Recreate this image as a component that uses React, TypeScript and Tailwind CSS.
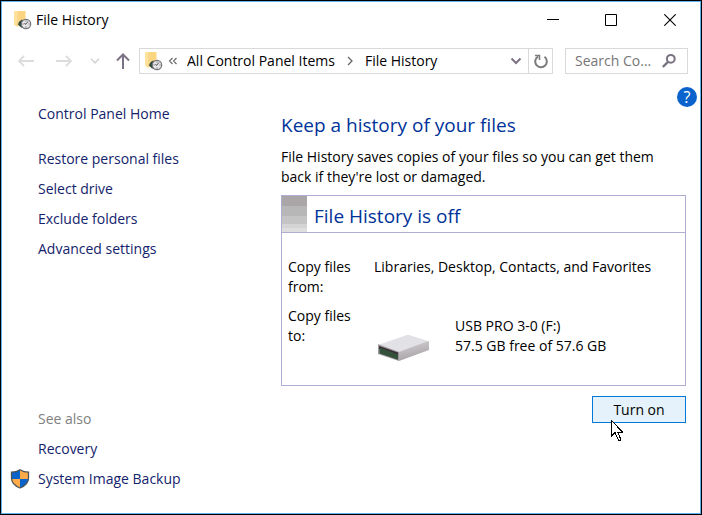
const TASK_LINKS = [
  "Restore personal files",
  "Select drive",
  "Exclude folders",
  "Advanced settings",
]

const linkClass = "text-[#13236b] hover:underline"

function FolderIcon({ className }: { className?: string }) {
  return (
    <svg className={className} width="18" height="20" viewBox="0 0 18 20" aria-hidden="true">
      <path d="M2 1h9.500v9L5 16 2 14z" fill="#fbd580" />
      <path d="M0 1h4l1 1v10l-1 5-4-2z" fill="#ffe29c" />
      <path d="M4 2v10l-1 4" fill="none" stroke="#f3c871" strokeWidth="0.8" />
      <path d="M8.500 9.500C6 10.500 4.500 12 4 14.500l3 3 3 .5z" fill="#2f4a3c" />
      <circle cx="12" cy="14" r="4.700" fill="#e6e6e6" stroke="#77737a" strokeWidth="1.200" />
      <path d="M11.500 14.500l2.500-3M11.500 14.500l-1-1.500M12 10.600v.9M12 16.500v.9M8.600 14h.9M14.600 14h.9" stroke="#444" strokeWidth="0.9" />
    </svg>
  )
}

function ShieldIcon() {
  return (
    <svg width="20" height="20" viewBox="0 0 20 20" aria-hidden="true">
      <defs>
        <clipPath id="shield">
          <path d="M10 .8C7.500 2.500 4.500 3.200 1.500 3.200v5.800c0 4.500 3.500 8 8.500 10 5-2 8.500-5.500 8.500-10V3.200C15.500 3.200 12.500 2.500 10 .8z" />
        </clipPath>
      </defs>
      <g clipPath="url(#shield)">
        <path d="M0 0h10v10H0zM10 10h10v10H10z" fill="#0a63c9" />
        <path d="M10 0h10v10H10zM0 10h10v10H0z" fill="#ffab4a" />
      </g>
      <path
        d="M10 .8C7.500 2.500 4.500 3.200 1.500 3.200v5.800c0 4.500 3.500 8 8.500 10 5-2 8.500-5.500 8.500-10V3.200C15.500 3.200 12.500 2.500 10 .8z"
        fill="none"
        stroke="#4c5458"
        strokeWidth="1.3"
      />
    </svg>
  )
}

function DriveIcon() {
  return (
    <svg width="54" height="28" viewBox="0 0 54 28" aria-hidden="true">
      <defs>
        <linearGradient id="drive-side" x1="0" y1="0" x2="0.3" y2="1">
          <stop offset="0" stopColor="#d3d1d4" />
          <stop offset="1" stopColor="#a9a3a6" />
        </linearGradient>
      </defs>
      <path d="M1 11L30 1q1-.3 2 0l19 6-29 12z" fill="#e1e1e6" />
      <path d="M22 18L51 7q1 0 1 1v8L22 27z" fill="url(#drive-side)" />
      <path d="M1 11q0-1 1-.6l20 7.600v9L1 20z" fill="#9c979c" />
      <path d="M2 12l19 6.600V21L2 15z" fill="#3a3034" />
      <path d="M2.500 13.500l18.500 7V25.800L2.500 19.500z" fill="#34523a" />
    </svg>
  )
}

function CursorIcon() {
  return (
    <svg
      className="pointer-events-none absolute top-6 left-[19px]"
      width="12"
      height="21"
      viewBox="0 0 12 21"
      aria-hidden="true"
      shapeRendering="crispEdges"
    >
      <path
        d="M.5.5v15.500l3.500-3.500 3.500 7.500h2v-1.500l-3-6.500h5z"
        fill="#fff"
        stroke="#000"
        strokeWidth="1"
      />
    </svg>
  )
}

function TitleBar() {
  return (
    <header className="flex h-9 items-center pl-3">
      <FolderIcon />
      <h1 className="ml-1 flex-1">File History</h1>
      <div className="flex h-full">
        <button aria-label="Minimize" className="flex w-[58px] items-center justify-center">
          <svg width="12" height="12" viewBox="0 0 12 12" stroke="#000">
            <path d="M0 5.500h12" />
          </svg>
        </button>
        <button aria-label="Maximize" className="flex w-[58px] items-center justify-center">
          <svg width="12" height="12" viewBox="0 0 12 12" stroke="#000" fill="none">
            <path d="M.5.5h11v11H.5z" />
          </svg>
        </button>
        <button aria-label="Close" className="flex w-[60px] items-center justify-center">
          <svg width="12" height="12" viewBox="0 0 12 12" stroke="#000">
            <path d="M.3.3l11.400 11.400M11.700.3L.3 11.700" strokeWidth="1.1" />
          </svg>
        </button>
      </div>
    </header>
  )
}

function NavBar() {
  return (
    <nav className="flex h-[46px] items-center pr-3 pl-[5px]">
      <button aria-label="Back" className="flex w-[38px] justify-center">
        <svg width="16" height="12" viewBox="0 0 16 12" fill="none" stroke="#dcdcdc" strokeWidth="1.8">
          <path d="M1 6h15M6 1L1 6l5 5" />
        </svg>
      </button>
      <button aria-label="Forward" className="flex w-[38px] justify-center">
        <svg width="16" height="12" viewBox="0 0 16 12" fill="none" stroke="#dcdcdc" strokeWidth="1.8">
          <path d="M0 6h15M10 1l5 5-5 5" />
        </svg>
      </button>
      <button aria-label="Recent locations" className="flex w-6 justify-center">
        <svg width="10" height="6" viewBox="0 0 10 6" fill="none" stroke="#d4d4d4" strokeWidth="1.6">
          <path d="M1 .8l4 4 4-4" />
        </svg>
      </button>
      <button aria-label="Up" className="flex w-8 justify-center">
        <svg width="14" height="16" viewBox="0 0 14 16" fill="none" stroke="#7d7384" strokeWidth="2">
          <path d="M7 16V2M1 7.500l6-6 6 6" />
        </svg>
      </button>

      <div className="flex h-[26px] min-w-0 flex-1 items-center border border-[#d9d9d9] pl-[5px]">
        <FolderIcon className="shrink-0" />
        <svg className="ml-[5px] shrink-0" width="10" height="8" viewBox="0 0 10 8" fill="none" stroke="#666" strokeWidth="1.1">
          <path d="M4.500 1l-3 3 3 3M8.500 1l-3 3 3 3" />
        </svg>
        <a href="#all" className="ml-[9px] whitespace-nowrap">All Control Panel Items</a>
        <svg className="mx-3 shrink-0" width="6" height="10" viewBox="0 0 6 10" fill="none" stroke="#666" strokeWidth="1.3">
          <path d="M1 1l4 4-4 4" />
        </svg>
        <a href="#history" className="whitespace-nowrap">File History</a>
        <button aria-label="Previous locations" className="ml-auto flex w-6 justify-center">
          <svg width="12" height="8" viewBox="0 0 12 8" fill="none" stroke="#7d7384" strokeWidth="2">
            <path d="M1.500 1.500L6 6l4.500-4.500" />
          </svg>
        </button>
        <button aria-label="Refresh" className="flex h-full w-6 items-center justify-center border-l border-[#d9d9d9]">
          <svg width="14" height="15" viewBox="0 0 14 15" fill="none" stroke="#7c7c7c" strokeWidth="2">
            <path d="M10.500 2.800A5.800 5.800 0 1 1 4 2.500" />
            <path d="M1 1.500h4.500V6" strokeWidth="1.600" />
          </svg>
        </button>
      </div>

      <div className="ml-3 flex h-[26px] w-[123px] items-center border border-[#d9d9d9] pr-[10px] pl-[9px]">
        <input
          type="text"
          aria-label="Search Control Panel"
          placeholder="Search Co..."
          className="w-full min-w-0 flex-1 outline-none placeholder:text-[#767676]"
        />
        <svg className="shrink-0" width="16" height="16" viewBox="0 0 16 16" fill="none" stroke="#7a7280" strokeWidth="2">
          <circle cx="9.800" cy="5.800" r="3.900" />
          <path d="M7 8.800L1.800 14" strokeWidth="2.400" />
        </svg>
      </div>
    </nav>
  )
}

function Sidebar() {
  return (
    <aside className="flex w-[279px] shrink-0 flex-col pt-[15px] pb-[19px] pl-9 leading-[30px]">
      <a href="#home" className={linkClass}>Control Panel Home</a>
      <ul className="mt-[15px]">
        {TASK_LINKS.map((label) => (
          <li key={label}>
            <a href="#task" className={linkClass}>{label}</a>
          </li>
        ))}
      </ul>
      <div className="mt-auto">
        <h2 className="text-[#808080]">See also</h2>
        <a href="#recovery" className={linkClass}>Recovery</a>
        <div className="-ml-7 flex items-center gap-2">
          <ShieldIcon />
          <a href="#backup" className={linkClass}>System Image Backup</a>
        </div>
      </div>
    </aside>
  )
}

function StatusPanel() {
  return (
    <section className="mt-2 border border-[#adadd6]">
      <div className="flex h-[37px] items-center border-b border-[#adadd6]">
        <div className="flex h-full w-[25px] flex-col">
          <div className="h-[10px] bg-[#aaa6a7]" />
          <div className="h-[10px] bg-[#b7b7b7]" />
          <div className="h-2 bg-[#c4c4c4]" />
          <div className="h-1 bg-[#d4d4d4]" />
          <div className="flex-1 bg-[#dedede]" />
        </div>
        <h3 className="ml-[7px] pt-1 text-[19px] leading-7 text-[#003399]">File History is off</h3>
      </div>
      <dl className="grid grid-cols-[86px_1fr] gap-y-[9px] pt-6 pb-[29px] pl-1.5">
        <dt className="pr-3">Copy files from:</dt>
        <dd>Libraries, Desktop, Contacts, and Favorites</dd>
        <dt className="pr-3">Copy files to:</dt>
        <dd className="flex items-end gap-6 pt-[10px]">
          <div className="-mb-1.5 ml-[3px]">
            <DriveIcon />
          </div>
          <p>
            USB PRO 3-0 (F:)
            <br />
            57.5 GB free of 57.6 GB
          </p>
        </dd>
      </dl>
    </section>
  )
}

export default function App() {
  return (
    <div className="flex min-h-screen flex-col border border-black bg-white font-['Open_Sans',sans-serif] text-sm leading-5 text-black">
      <div className="flex flex-1 flex-col border border-[#5fb2ee]">
        <TitleBar />
        <NavBar />
        <div className="flex flex-1">
          <Sidebar />
          <main className="min-w-0 flex-1">
            <div className="flex justify-end pt-[3px] pr-[3px]">
              <button
                aria-label="Help"
                className="flex size-5 items-center justify-center rounded-full bg-[#0a62cc] text-base text-white"
              >
                ?
              </button>
            </div>
            <div className="pr-[14px]">
              <h2 className="mt-1 text-[19px] leading-7 text-[#003399]">Keep a history of your files</h2>
              <p className="mt-2">
                File History saves copies of your files so you can get them back if they&apos;re lost or damaged.
              </p>
              <StatusPanel />
              <div className="mt-[10px] flex justify-end">
                <div className="relative">
                  <button className="h-[27px] w-[94px] border border-[#0078d7] bg-[#e5f1fb]">Turn on</button>
                  <CursorIcon />
                </div>
              </div>
            </div>
          </main>
        </div>
      </div>
    </div>
  )
}
